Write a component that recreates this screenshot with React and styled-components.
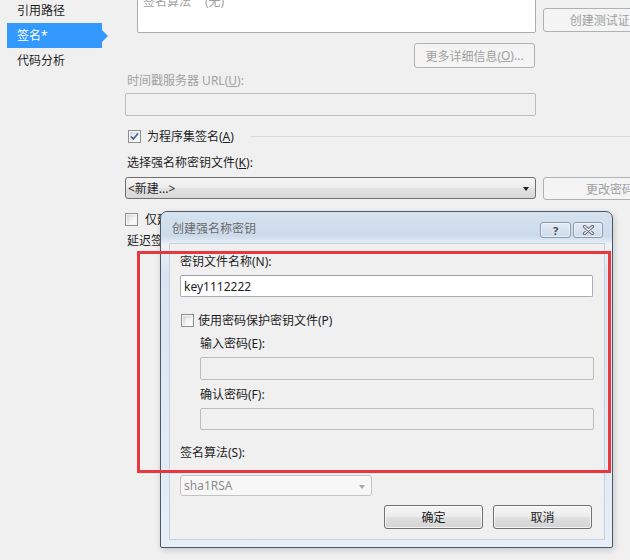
import React from "react";
import styled, { createGlobalStyle, css } from "styled-components";

const Global = createGlobalStyle`
  html, body { margin: 0; padding: 0; background: #f0f0f0; }
  body {
    font-family: "Noto Sans", "Noto Sans CJK SC", sans-serif;
    font-size: 12px;
    color: #1e1e1e;
  }
  * { box-sizing: border-box; }
`;

const Page = styled.div`
  position: relative;
  width: 630px;
  height: 560px;
  overflow: hidden;
  display: flex;
  background: #f0f0f0;
`;

/* ---------- left navigation ---------- */
const Sidebar = styled.nav`
  width: 125px;
  flex: none;
  margin-top: -2px;
  padding-left: 7px;
  display: flex;
  flex-direction: column;
`;

const NavItem = styled.div`
  position: relative;
  width: 95px;
  height: 25px;
  line-height: 25px;
  padding-left: 10px;
  color: #1e1e1e;
  ${(p) =>
    p.$active &&
    css`
      background: #3399ff;
      color: #fff;
      &::after {
        content: "";
        position: absolute;
        right: -6px;
        top: 50%;
        transform: translateY(-50%);
        border-left: 6px solid #3399ff;
        border-top: 6px solid transparent;
        border-bottom: 6px solid transparent;
      }
    `}
`;

/* ---------- signing page ---------- */
const Main = styled.main`
  flex: none;
  width: 700px;
  display: flex;
  flex-direction: column;
`;

const Row = styled.div`
  display: flex;
  align-items: ${(p) => p.$align || "flex-start"};
  gap: 7px;
  margin-top: ${(p) => p.$mt || 0}px;
`;

const FieldCol = styled.div`
  width: 411px;
  flex: none;
  display: flex;
  justify-content: ${(p) => p.$justify || "flex-start"};
  padding-left: ${(p) => p.$indent || 0}px;
`;

const InfoBox = styled.div`
  width: 399px;
  height: 83px;
  margin-top: -50px;
  border: 1px solid #abadb3;
  border-radius: 2px;
  background: #fff;
  padding: 6px 5px;
`;

const InfoLine = styled.div`
  display: flex;
  line-height: 18px;
  color: #a0a0a0;
`;

const InfoKey = styled.span`
  width: 62px;
`;

const PushButton = styled.div`
  flex: none;
  width: ${(p) => p.$w}px;
  height: ${(p) => p.$h || 24}px;
  margin-bottom: ${(p) => p.$mb || 0}px;
  margin-right: ${(p) => p.$mr || 0}px;
  display: flex;
  align-items: center;
  justify-content: center;
  border-radius: 3px;
  white-space: nowrap;
  ${(p) =>
    p.$disabled
      ? css`
          border: 1px solid #adb2b5;
          background: #f4f4f4;
          color: #a0a0a0;
        `
      : css`
          border: 1px solid #707070;
          background: linear-gradient(#f6f6f6 0%, #ececec 45%, #dedede 55%, #d4d4d4 100%);
          box-shadow: inset 0 0 0 1px rgba(255, 255, 255, 0.7);
          color: #1e1e1e;
        `}
`;

const Label = styled.div`
  line-height: 16px;
  margin-top: ${(p) => p.$mt || 0}px;
  padding-left: ${(p) => p.$indent || 0}px;
  color: ${(p) => (p.$disabled ? "#a0a0a0" : "#1e1e1e")};
  white-space: nowrap;
`;

const TextBox = styled.div`
  width: ${(p) => p.$w}px;
  height: ${(p) => p.$h || 23}px;
  margin-top: ${(p) => p.$mt || 0}px;
  margin-left: ${(p) => p.$indent || 0}px;
  border-radius: 2px;
  padding-left: 3px;
  display: flex;
  align-items: center;
  ${(p) =>
    p.$disabled
      ? css`
          border: 1px solid #bcbcbc;
          background: #f0f0f0;
        `
      : css`
          border: 1px solid #abadb3;
          border-top-color: #9a9da3;
          background: #fff;
        `}
`;

const Combo = styled.div`
  position: relative;
  width: ${(p) => p.$w}px;
  height: ${(p) => p.$h}px;
  margin-top: ${(p) => p.$mt || 0}px;
  border-radius: 3px;
  padding-left: ${(p) => p.$pad || 2}px;
  display: flex;
  align-items: center;
  ${(p) =>
    p.$disabled
      ? css`
          border: 1px solid #c3c3c3;
          background: #f7f7f7;
          color: #8d8d8d;
        `
      : css`
          border: 1px solid #707070;
          background: linear-gradient(#f5f5f5 0%, #ececec 50%, #e2e2e2 51%, #d8d8d8 100%);
          color: #1e1e1e;
        `}
  &::after {
    content: "";
    position: absolute;
    right: 6px;
    top: 50%;
    margin-top: -1px;
    border-top: 4px solid ${(p) => (p.$disabled ? "#a8a8a8" : "#1e1e1e")};
    border-left: 3.5px solid transparent;
    border-right: 3.5px solid transparent;
  }
`;

const CheckRow = styled.div`
  display: flex;
  align-items: center;
  height: 16px;
  margin-top: ${(p) => p.$mt || 0}px;
  padding-left: ${(p) => p.$indent || 0}px;
  white-space: nowrap;
`;

const Box = styled.span`
  position: relative;
  flex: none;
  width: 13px;
  height: 13px;
  margin-right: ${(p) => p.$gap || 6}px;
  border: 1px solid #8e8f8f;
  background: linear-gradient(135deg, #dcdcdc 0%, #f6f6f6 60%, #ffffff 100%);
  box-shadow: inset 0 0 0 1px #f4f4f4, inset 1px 1px 0 2px rgba(0, 0, 0, 0.04);
  display: flex;
  align-items: center;
  justify-content: center;
`;

const GroupRule = styled.span`
  flex: 1;
  height: 1px;
  margin-left: 17px;
  background: #d5dbe0;
`;

/* ---------- modal dialog ---------- */
const Dialog = styled.section`
  position: absolute;
  left: 160px;
  top: 211px;
  width: 453px;
  height: 337px;
  border: 1px solid #4d5866;
  border-radius: 7px 7px 2px 2px;
  padding: 0 7px 7px 8px;
  display: flex;
  flex-direction: column;
  background: linear-gradient(
    to bottom,
    #d5e2ef 0px,
    #ccdbeb 24px,
    #e3ebf4 30px,
    #eef2f7 33px,
    #d9e5f2 60px,
    #e6eef7 100%
  );
  box-shadow: 1px 2px 6px rgba(0, 0, 0, 0.18);
`;

const TitleBar = styled.header`
  height: 31px;
  flex: none;
  display: flex;
  align-items: flex-start;
  padding: 10px 2px 0 3px;
`;

const Title = styled.div`
  flex: 1;
  line-height: 14px;
  color: #6a6a6a;
`;

const CaptionButton = styled.div`
  width: ${(p) => p.$w}px;
  height: 16px;
  margin-left: ${(p) => p.$ml || 0}px;
  border: 1px solid #8c9bb0;
  border-radius: 3px;
  background: linear-gradient(#e2ebf5, #cfdbea);
  box-shadow: inset 0 0 0 1px rgba(255, 255, 255, 0.5);
  display: flex;
  align-items: center;
  justify-content: center;
  color: #4b4b4b;
  font-size: 11px;
  font-weight: bold;
  line-height: 1;
`;

const DialogBody = styled.div`
  flex: 1;
  background: #f0f0f0;
  border: 1px solid #c3d0de;
  padding: 10px 11px 0 10px;
  display: flex;
  flex-direction: column;
`;

const ButtonRow = styled.div`
  display: flex;
  justify-content: flex-end;
  gap: 10px;
  margin-top: 9px;
  padding-right: 1px;
`;

const Annotation = styled.div`
  position: absolute;
  left: 137px;
  top: 251px;
  width: 474px;
  height: 222px;
  border: 3px solid #e8383d;
  pointer-events: none;
`;

const CheckMark = () => (
  <svg width="9" height="9" viewBox="0 0 9 9">
    <path d="M1 4.5 L3.4 7 L8 1.5" fill="none" stroke="#4a5f8f" strokeWidth="1.8" />
  </svg>
);

const CloseGlyph = () => (
  <svg width="13" height="10" viewBox="0 0 13 10">
    <path d="M2.5 1.5 L10.5 8.5 M10.5 1.5 L2.5 8.5" stroke="#5d6570" strokeWidth="3.2" strokeLinecap="round" />
    <path d="M2.5 1.5 L10.5 8.5 M10.5 1.5 L2.5 8.5" stroke="#f4f6f8" strokeWidth="1.4" strokeLinecap="round" />
  </svg>
);

const navItems = ["引用路径", "签名*", "代码分析"];

const certInfo = [
  ["颁发给", "(无)"],
  ["颁发者", "(无)"],
  ["签名算法", "(无)"],
];

export default function App() {
  return (
    <>
      <Global />
      <Page>
        <Sidebar>
          {navItems.map((t) => (
            <NavItem key={t} $active={t === "签名*"}>
              {t}
            </NavItem>
          ))}
        </Sidebar>

        <Main>
          <Row $align="flex-end">
            <FieldCol $indent={12}>
              <InfoBox>
                {certInfo.map(([k, v]) => (
                  <InfoLine key={k}>
                    <InfoKey>{k}</InfoKey>
                    <span>{v}</span>
                  </InfoLine>
                ))}
              </InfoBox>
            </FieldCol>
            <PushButton $disabled $w={150} $h={24} $mb={1}>
              创建测试证书(C)...
            </PushButton>
          </Row>

          <Row $mt={10}>
            <FieldCol $justify="flex-end">
              <PushButton $disabled $w={121} $h={25} $mr={1}>
                更多详细信息(<u>O</u>)...
              </PushButton>
            </FieldCol>
          </Row>

          <Label $mt={5} $indent={2} $disabled>
            时间戳服务器 URL(<u>U</u>):
          </Label>
          <TextBox $disabled $w={411} $h={23} $mt={4} />

          <CheckRow $mt={12} $indent={3}>
            <Box>
              <CheckMark />
            </Box>
            <span>
              为程序集签名(<u>A</u>)
            </span>
            <GroupRule />
          </CheckRow>

          <Label $mt={11} $indent={2}>
            选择强名称密钥文件(<u>K</u>):
          </Label>
          <Row $mt={6}>
            <Combo $w={411} $h={22}>
              &lt;新建...&gt;
            </Combo>
            <PushButton $disabled $w={158} $h={23}>
              更改密码(P)...
            </PushButton>
          </Row>

          <CheckRow $mt={11}>
            <Box $gap={7} />
            <span>仅延迟签名(Y)</span>
          </CheckRow>
          <Label $mt={6} $indent={2}>
            延迟签名的项目将不会运行或无法调试
          </Label>
        </Main>

        <Dialog>
          <TitleBar>
            <Title>创建强名称密钥</Title>
            <CaptionButton $w={31}>?</CaptionButton>
            <CaptionButton $w={30} $ml={2}>
              <CloseGlyph />
            </CaptionButton>
          </TitleBar>
          <DialogBody>
            <Label>密钥文件名称(N):</Label>
            <TextBox $w={413} $h={22} $mt={5}>
              key1112222
            </TextBox>

            <CheckRow $mt={15} $indent={1}>
              <Box $gap={4} />
              <span>使用密码保护密钥文件(P)</span>
            </CheckRow>

            <Label $mt={8} $indent={20}>
              输入密码(E):
            </Label>
            <TextBox $disabled $w={394} $h={23} $mt={5} $indent={20} />
            <Label $mt={7} $indent={20}>
              确认密码(F):
            </Label>
            <TextBox $disabled $w={394} $h={22} $mt={5} $indent={20} />

            <Label $mt={15}>签名算法(S):</Label>
            <Combo $disabled $w={192} $h={21} $mt={14} $pad={3}>
              sha1RSA
            </Combo>

            <ButtonRow>
              <PushButton $w={99} $h={24}>
                确定
              </PushButton>
              <PushButton $w={99} $h={24}>
                取消
              </PushButton>
            </ButtonRow>
          </DialogBody>
        </Dialog>

        <Annotation />
      </Page>
    </>
  );
}
